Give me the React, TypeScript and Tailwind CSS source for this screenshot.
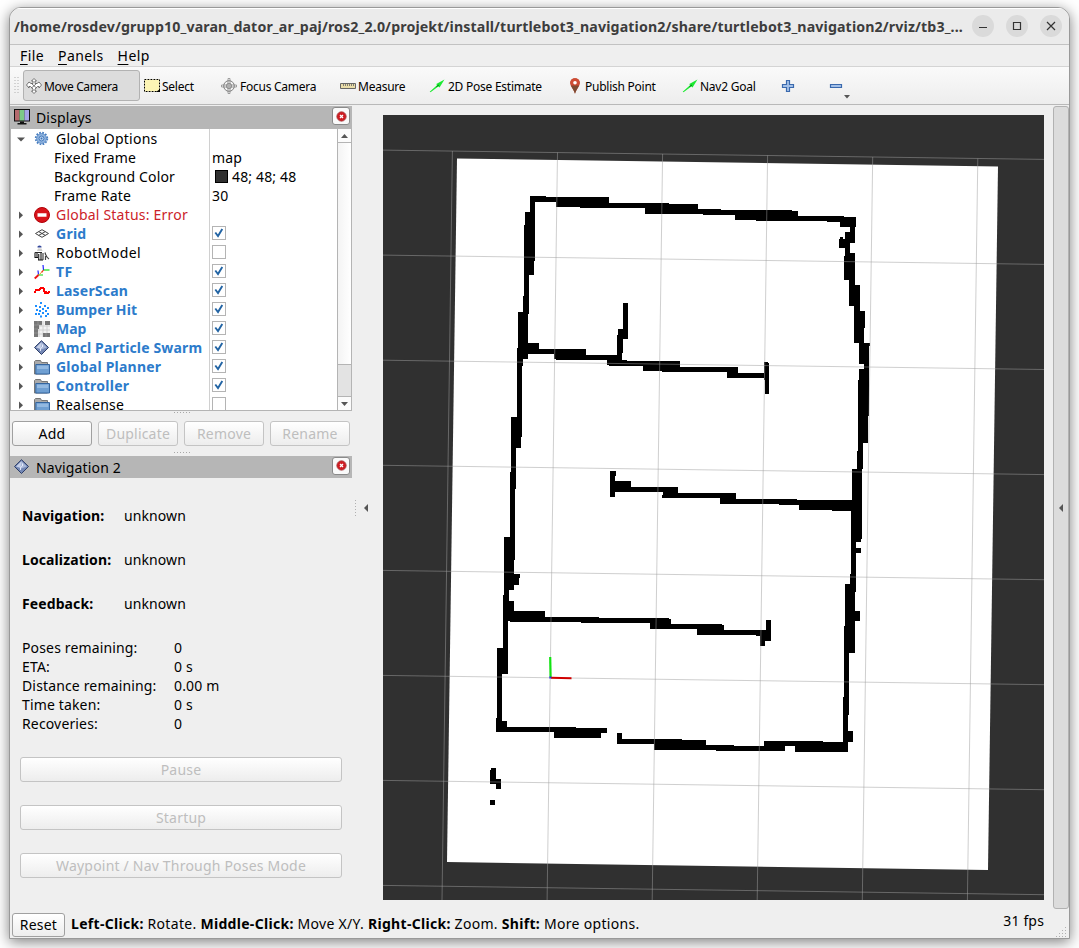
import React from "react";

type Rect = [number, number, number, number];

/* Occupied cells, as [left, top, right, bottom] in thirds of a pixel. */
const NORTH: Rect[] = [
  [90, 48, 138, 66], [90, 51, 327, 66], [168, 51, 327, 80], [240, 69, 507, 83], [435, 72, 507, 101], [438, 72, 594, 101],
  [594, 87, 663, 101], [610, 90, 705, 104], [705, 90, 876, 119], [705, 93, 894, 119], [768, 108, 1032, 122],
  [981, 111, 1068, 125], [1020, 111, 1068, 141], [1050, 125, 1065, 189], [1035, 156, 1065, 189],
  [1020, 171, 1029, 177], [1017, 177, 1050, 204], [1035, 189, 1050, 228], [1050, 219, 1065, 228], [1032, 228, 1065, 300],
  [1047, 300, 1065, 378], [1047, 315, 1080, 378], [1062, 378, 1080, 489], [1062, 393, 1095, 444], [1062, 444, 1092, 489],
  [1077, 489, 1110, 498], [1077, 489, 1107, 552], [1092, 552, 1107, 660], [1077, 567, 1107, 600], [1074, 600, 1107, 660],
  [90, 48, 105, 243], [75, 96, 105, 136], [72, 136, 105, 243], [72, 243, 102, 285], [72, 285, 87, 402], [69, 348, 87, 402],
  [54, 396, 84, 537], [51, 504, 69, 558], [51, 558, 66, 660], [54, 489, 117, 521], [84, 507, 168, 521],
  [162, 507, 258, 537], [168, 525, 366, 539], [321, 540, 381, 554], [327, 543, 540, 557], [429, 543, 540, 572],
  [486, 561, 714, 575], [681, 561, 714, 593], [681, 579, 800, 593], [793, 546, 804, 600], [795, 549, 807, 641],
  [369, 369, 384, 477], [354, 447, 384, 477], [351, 465, 369, 519], [351, 519, 366, 540],
];

const MIDDLE: Rect[] = [
  [111, 0, 126, 141], [93, 81, 126, 141], [93, 141, 123, 174], [93, 174, 108, 297], [90, 246, 108, 297], [90, 297, 105, 441],
  [72, 441, 105, 510], [72, 510, 102, 600], [72, 552, 120, 564], [72, 564, 117, 585], [72, 600, 87, 660],
  [69, 615, 87, 660], [69, 633, 102, 660], [1134, 0, 1167, 78], [1134, 78, 1164, 159], [1134, 159, 1149, 237],
  [1131, 183, 1149, 237], [1116, 237, 1146, 447], [1113, 363, 1143, 456], [1113, 456, 1128, 582], [1128, 474, 1143, 489],
  [1110, 552, 1128, 606], [1095, 582, 1128, 606], [1095, 582, 1125, 660], [390, 243, 408, 258], [390, 243, 405, 321],
  [390, 273, 453, 306], [405, 291, 594, 306], [549, 291, 594, 324], [546, 315, 594, 324], [549, 309, 768, 324],
  [720, 309, 768, 342], [720, 327, 951, 342], [897, 330, 1116, 345], [957, 330, 1116, 360], [1056, 330, 1116, 363],
];

const SOUTH: Rect[] = [
  [69, 45, 87, 93], [69, 62, 102, 123], [69, 93, 195, 123], [90, 111, 357, 126], [303, 114, 567, 129], [510, 114, 567, 147],
  [510, 117, 573, 147], [510, 132, 726, 147], [651, 132, 726, 165], [651, 135, 732, 165], [651, 150, 858, 165],
  [828, 150, 858, 168], [840, 168, 855, 198], [858, 120, 873, 183], [843, 150, 873, 183], [69, 123, 84, 282],
  [51, 204, 84, 282], [51, 282, 66, 423], [48, 414, 66, 456], [48, 423, 81, 456], [48, 441, 288, 456], [222, 444, 381, 459],
  [222, 444, 363, 474], [411, 459, 426, 492], [411, 477, 606, 492], [522, 480, 678, 510], [522, 495, 762, 510],
  [708, 498, 915, 513], [852, 483, 915, 513], [852, 483, 1029, 498], [945, 486, 1104, 516], [1095, 12, 1125, 219],
  [1125, 93, 1140, 123], [1092, 138, 1125, 219], [1092, 219, 1107, 405], [1089, 351, 1107, 405], [1089, 405, 1104, 516],
  [1089, 453, 1119, 486], [33, 564, 48, 612], [30, 570, 48, 612], [30, 597, 63, 612], [48, 597, 63, 627], [30, 660, 45, 675],
];

const GRID_ROWS = [150.1, 255.1, 360.2, 465.3, 570.4, 675.4, 780.4, 885.4];
const GRID_COLUMNS = [452.4, 557.5, 662.6, 767.6, 872.7, 977.8];

const toPath = (rects: Rect[]) => rects.map(([l, t, r, b]) => `M${l} ${t}H${r}V${b}H${l}Z`).join("");

function MapView() {
  return (
    <svg className="block h-[785px] w-[661px] bg-[#303030]" viewBox="383 115 661 785">
      <path d="M457 158.500L998 166.500L988 870L447 862Z" fill="#fff" />
      <g shapeRendering="crispEdges" fill="#000">
        <path transform="translate(500 180) scale(.33333)" d={toPath(NORTH)} />
        <path transform="translate(480 390) scale(.33333)" d={toPath(MIDDLE)} />
        <path transform="translate(480 580) scale(.33333)" d={toPath(SOUTH)} />
      </g>
      <g stroke="#a0a0a0" strokeOpacity=".5" strokeWidth="1">
        {GRID_ROWS.map((y) => <path key={y} d={`M383 ${y}L1044 ${y + 9.3}`} />)}
        {GRID_COLUMNS.map((x, i) => <path key={x} d={`M${x} ${151 + i * 1.5}L${x - 10.4} 900`} />)}
      </g>
      <path d="M551 677.800L571.500 678.200" stroke="#d00000" strokeWidth="2" />
      <path d="M550.600 677L550.200 657" stroke="#12e312" strokeWidth="2.200" />
      <path d="M549.300 676.500h2v2h-2z" fill="#3030e0" />
    </svg>
  );
}

const DiamondIcon = () => (
  <svg className="size-4" viewBox="0 0 16 16">
    <path d="M7.500 .7L14.500 7.500L7.500 14.500L.5 7.500Z" fill="#7488b5" stroke="#2c3d68" strokeWidth="1" />
    <path d="M7.500 2.200L12.800 7.500L7.500 9.500L2.200 7.500Z" fill="#a9b8d8" />
    <path d="M7.500 2.200L2.200 7.500L6.500 8.400Z" fill="#c7d1e8" />
    <path d="M6.500 11V8.500L8.500 7V4.500" fill="none" stroke="#eef2ff" strokeWidth=".9" />
  </svg>
);

const FolderIcon = () => (
  <svg className="size-4" viewBox="0 0 16 16">
    <path d="M.5 15V2.500L1.500 1.500H6.500L7.500 3.500H13.500V15Z" fill="#aaa" stroke="#777" />
    <path d="M1.800 5.500H15.500V15H1.800Z" fill="#6f9fd2" stroke="#34659f" />
    <path d="M3 6.700H14.300V10H3Z" fill="#93b9e1" />
  </svg>
);

const GearIcon = () => (
  <svg className="size-4" viewBox="0 0 16 16">
    <circle cx="7.500" cy="7.500" r="5.800" fill="none" stroke="#4a7fc0" strokeWidth="1.800" strokeDasharray="1.700 1.340" />
    <circle cx="7.500" cy="7.500" r="4.900" fill="#93b6e0" stroke="#4a7fc0" strokeWidth=".8" />
    <circle cx="7.500" cy="7.500" r="2.500" fill="#bcd3ee" stroke="#3b73b8" strokeWidth=".9" />
    <circle cx="7.500" cy="7.500" r="1" fill="#3b73b8" />
  </svg>
);

const ErrorIcon = () => (
  <svg className="size-4" viewBox="0 0 16 16">
    <circle cx="8" cy="8" r="7.500" fill="#d8131a" stroke="#b00008" />
    <path d="M3.500 6.200H12.500V9.800H3.500Z" fill="#fff" />
  </svg>
);

const GridIcon = () => (
  <svg className="size-4" viewBox="0 0 16 16" fill="none" stroke="#444" strokeWidth="1">
    <path d="M1.500 7.500L8 3.700L14.500 7.500L8 11.300ZM4.700 5.600L11.300 9.400M11.300 5.600L4.700 9.400" />
  </svg>
);

const RobotIcon = () => (
  <svg className="size-4" viewBox="0 0 16 16">
    <path d="M3.500 1.500Q5.500 -.4 7.500 1.500V2.500H3.500Z" fill="#33479a" />
    <path d="M4 3.500H7.500L8.500 6H3Z" fill="#ccc" />
    <path d="M1 7.500V13M3 7V12M4.700 9V15M7 7.500V15M1 7.500H8" stroke="#2a2a2a" strokeWidth="1.200" fill="none" />
    <path d="M9 8V15M11.500 11V15M11 7.500Q12 12 15 14" stroke="#444" strokeWidth="1.200" fill="none" />
    <path d="M4 15H9M1 12.500H4" stroke="#111" strokeWidth="1.200" />
  </svg>
);

const TfIcon = () => (
  <svg className="size-4" viewBox="0 0 16 16" fill="none" strokeWidth="1.200">
    <path d="M9 1L9.500 6" stroke="#22f" />
    <path d="M9.500 6H15.500" stroke="#1d1" />
    <path d="M9.500 6L7.500 8.500" stroke="#e11" />
    <path d="M4 6.500L4.500 11" stroke="#22f" />
    <path d="M4.500 11H9" stroke="#3d3" />
    <path d="M4.500 11L.7 14.500" stroke="#e11" strokeWidth="1.800" />
    <path d="M4.500 11L9 7" stroke="#e80" strokeDasharray="1 1" />
  </svg>
);

const LaserIcon = () => (
  <svg className="size-4" viewBox="0 0 16 16" fill="#f00" shapeRendering="crispEdges">
    <path d="M0 8H2V10H0ZM1 6H6V8H1ZM5 5H7V7H5ZM6 4H10V6H6ZM9 5H11V9H9ZM10 8H13V11H10ZM12 9H15V11H12ZM14 8H16V10H14Z" />
  </svg>
);

const BumperIcon = () => (
  <svg className="size-4" viewBox="0 0 16 16" fill="#1e8fff">
    <path d="M6 0h2v2H6zM1 3h2v2H1zM5 4h2v2H5zM10 3h2v2h-2zM8 6h2v2H8zM13 5h2v2h-2zM2 7h2v2H2zM5 8h2v2H5zM1 11h2v2H1zM4 11h2v2H4zM8 10h2v2H8zM11 8h2v2h-2zM13 11h2v2h-2zM6 13.500h2v2H6zM11 13h2v2h-2z" />
  </svg>
);

const MapIcon = () => (
  <svg className="size-4" viewBox="0 0 16 16">
    <path d="M0 0H16V16H0Z" fill="#f4f4f4" />
    <path d="M5 0V16M9 0V16M13 0V16M0 5H16M0 9H16M0 13H16" stroke="#ccc" strokeWidth=".8" />
    <path d="M0 0H8V4H5V8H4V16H0ZM11 0H16V4H11ZM9 12H16V16H9Z" fill="#777" />
    <path d="M4 0V4M0 4H8M0 8H4M0 12H4M12 12V16" stroke="#aaa" strokeWidth=".5" />
  </svg>
);

const CloseBox = () => (
  <span className="flex size-[18px] items-center justify-center rounded-[3px] border border-[#8a8a8a] bg-[#fafafa]">
    <svg className="size-[11px]" viewBox="0 0 11 11">
      <circle cx="5.500" cy="5.500" r="4.700" fill="#cf1c22" stroke="#a3474a" strokeWidth=".8" />
      <path d="M4 4L7 7M7 4L4 7" stroke="#fff" strokeWidth="1.300" />
    </svg>
  </span>
);

const MoveIcon = () => (
  <svg className="size-4" viewBox="0 0 16 16" fill="#fff" stroke="#555" strokeWidth=".8">
    <path d="M8 .5L10.500 3H9V5.500H11L13 4L15.500 7L13 10V8.500H11.500L9 11V13H10.500L8 15.500L5.500 13H7V11L4.500 8.500H3V10L.5 7L3 4L5 5.500H7V3H5.500Z" />
    <path d="M5.500 5.500L10.500 10M10.500 5.500L5.500 10" />
  </svg>
);

const SelectIcon = () => (
  <svg className="size-4" viewBox="0 0 16 16">
    <path d="M.5 1.500H15.500V13.500H.5Z" fill="#fdf5b5" stroke="#000" strokeDasharray="1.800 1.200" />
    <path d="M16 11V14H12Z" fill="#000" />
  </svg>
);

const FocusIcon = () => (
  <svg className="size-4" viewBox="0 0 16 16" fill="none" stroke="#808080">
    <circle cx="8" cy="8" r="5.300" strokeWidth="1" />
    <circle cx="8" cy="8" r="2.700" strokeWidth=".8" />
    <path d="M7 .5V15.500M9 .5V15.500M.5 7H15.500M.5 9H15.500" strokeWidth=".7" />
    <path d="M7 .5H9M7 15.500H9M.5 7V9M15.500 7V9" strokeWidth=".7" />
  </svg>
);

const MeasureIcon = () => (
  <svg className="size-4" viewBox="0 0 16 16">
    <path d="M.5 5.500H15.500V10.500H.5Z" fill="#e9dda9" stroke="#666" />
    <path d="M3.500 6V8M5.500 6V8M7.500 6V8M9.500 6V8M11.500 6V8M13.500 6V8" stroke="#666" strokeWidth=".8" />
  </svg>
);

const GoalIcon = () => (
  <svg className="size-4" viewBox="0 0 16 16">
    <path d="M.7 13.700L8 7.300L7.300 6L15.500 1.500L10.500 9.500L9.300 8.500L1.500 14.200Z" fill="#1bea30" />
    <path d="M7.500 8.500L10 7" stroke="#0a7a18" />
  </svg>
);

const PinIcon = () => (
  <svg className="size-4" viewBox="0 0 16 16">
    <path d="M8 15.800C7.200 12 3.200 8.600 3.200 5A4.800 4.800 0 0 1 12.800 5C12.800 8.600 8.800 12 8 15.800Z" fill="#b8472f" />
    <path d="M8 15.800C7.200 12.500 5 10 4.200 7.800H11.800C11 10 8.800 12.500 8 15.800Z" fill="#7b4a32" />
    <path d="M3.200 5A4.800 4.800 0 0 1 12.800 5L11.800 7H4.200Z" fill="#cf4c34" />
    <circle cx="8" cy="4.800" r="1.800" fill="#fff" />
  </svg>
);

const PlusIcon = () => (
  <svg className="size-4" viewBox="0 0 16 16">
    <path d="M6.500 2.500H9.500V6.500H13.500V9.500H9.500V13.500H6.500V9.500H2.500V6.500H6.500Z" fill="#a3c0e8" stroke="#3a69ad" strokeWidth="1.200" />
  </svg>
);

const MinusIcon = () => (
  <svg className="size-4" viewBox="0 0 16 16">
    <path d="M2.500 6.500H13.500V9.500H2.500Z" fill="#a3c0e8" stroke="#3a69ad" strokeWidth="1.200" />
  </svg>
);

const MonitorIcon = () => (
  <svg className="mb-px size-4" viewBox="0 0 16 16">
    <path d="M0 0H16V12.500H0Z" fill="#111" />
    <path d="M1 1H5.500V11.500H1Z" fill="#b56a6e" />
    <path d="M5.500 1H10.500V11.500H5.500Z" fill="#7cc987" />
    <path d="M10.500 1H15V11.500H10.500Z" fill="#a5a3e6" />
    <path d="M6 12.500H10V14H12.500V15.500H3.500V14H6Z" fill="#111" />
  </svg>
);

type Display = {
  label: string;
  icon?: () => React.ReactElement;
  tone?: "on" | "error";
  open?: boolean;
  checked?: boolean;
  value?: string;
  swatch?: boolean;
  tracking?: string;
};

const DISPLAYS: Display[] = [
  { label: "Global Options", icon: GearIcon, open: true, tracking: "tracking-[0.25px]" },
  { label: "Fixed Frame", value: "map", tracking: "tracking-[0.22px]" },
  { label: "Background Color", value: "48; 48; 48", swatch: true, tracking: "tracking-[0.16px]" },
  { label: "Frame Rate", value: "30", tracking: "tracking-[0.25px]" },
  { label: "Global Status: Error", icon: ErrorIcon, tone: "error", tracking: "tracking-[0.21px]" },
  { label: "Grid", icon: GridIcon, tone: "on", checked: true, tracking: "tracking-[0.25px]" },
  { label: "RobotModel", icon: RobotIcon, checked: false, tracking: "tracking-[0.45px]" },
  { label: "TF", icon: TfIcon, tone: "on", checked: true, tracking: "tracking-[0.5px]" },
  { label: "LaserScan", icon: LaserIcon, tone: "on", checked: true, tracking: "tracking-[0.2px]" },
  { label: "Bumper Hit", icon: BumperIcon, tone: "on", checked: true, tracking: "tracking-[0.1px]" },
  { label: "Map", icon: MapIcon, tone: "on", checked: true },
  { label: "Amcl Particle Swarm", icon: DiamondIcon, tone: "on", checked: true, tracking: "tracking-[0.15px]" },
  { label: "Global Planner", icon: FolderIcon, tone: "on", checked: true, tracking: "tracking-[0.22px]" },
  { label: "Controller", icon: FolderIcon, tone: "on", checked: true, tracking: "tracking-[0.28px]" },
  { label: "Realsense", icon: FolderIcon, checked: false, tracking: "tracking-[0.25px]" },
];

const TONES = { on: "font-bold text-[#2c7bcb]", error: "text-[#cc2229]", plain: "text-black" };

function DisplayRow({ item }: { item: Display }) {
  const Icon = item.icon;
  return (
    <div className="flex h-[19px] shrink-0">
      <div className="flex w-[198px] shrink-0 items-center overflow-hidden whitespace-nowrap">
        {Icon ? (
          <>
            <svg className="ml-[6px] mr-[9px] size-2 shrink-0" viewBox="0 0 8 8" fill="#555">
              {item.open ? <path d="M0 2.500H8L4 6.500Z" /> : <path d="M2 .5V8L6 4.200Z" />}
            </svg>
            <span className="mr-[6px] shrink-0"><Icon /></span>
          </>
        ) : (
          <span className="w-[43px] shrink-0" />
        )}
        <span className={TONES[item.tone ?? "plain"] + " " + (item.tracking ?? "")}>{item.label}</span>
      </div>
      <div className="flex flex-1 items-center border-l border-[#d0d0d0] pl-[2px] tracking-[0.15px]">
        {item.checked !== undefined && (
          <span className="mb-px flex size-[14px] items-center justify-center border border-[#b4b4b4] bg-white">
            {item.checked && (
              <svg className="size-[10px]" viewBox="0 0 10 10">
                <path d="M1.300 4.500L4 8L8.300 1" fill="none" stroke="#2264a4" strokeWidth="1.900" />
              </svg>
            )}
          </span>
        )}
        {item.swatch && <span className="ml-[3px] mr-[4px] size-[13px] border border-black bg-[#303030]" />}
        {item.value}
      </div>
    </div>
  );
}

const DotsH = () => (
  <svg className="ml-[2px] h-[2px] w-[17px]" viewBox="0 0 17 2" fill="#a8a8a8">
    <path d="M0 0h1v1H0zM3 0h1v1H3zM6 0h1v1H6zM9 0h1v1H9zM12 0h1v1h-1zM15 0h1v1h-1z" />
  </svg>
);

const BUTTON = "flex items-center justify-center rounded-[3px] border bg-linear-to-b from-white to-[#ededed] whitespace-nowrap tracking-[0.2px]";
const ENABLED = "border-[#a0a0a0] text-black";
const DISABLED = "border-[#c4c4c4] text-[#bebebe]";

const TOOLS = [
  { label: "Select", Icon: SelectIcon, box: "w-[77px]", gap: "ml-[2px]" },
  { label: "Focus Camera", Icon: FocusIcon, box: "w-[119px]", gap: "ml-[3px]" },
  { label: "Measure", Icon: MeasureIcon, box: "w-[89px]", gap: "ml-[2px]" },
  { label: "2D Pose Estimate", Icon: GoalIcon, box: "w-[138px]", gap: "ml-[3px]" },
  { label: "Publish Point", Icon: PinIcon, box: "w-[115px]", gap: "ml-[2px]" },
  { label: "Nav2 Goal", Icon: GoalIcon, box: "w-[98px]", gap: "ml-[2px]" },
];

const STATUS = [["Navigation:", "unknown"], ["Localization:", "unknown"], ["Feedback:", "unknown"]];
const METRICS = [["Poses remaining:", "0"], ["ETA:", "0 s"], ["Distance remaining:", "0.00 m"], ["Time taken:", "0 s"], ["Recoveries:", "0"]];

function TitleBar() {
  return (
    <header className="flex h-[37px] shrink-0 items-center border-b border-[#c2c2c2] bg-[#ebebeb] pl-1 shadow-[inset_0_1px_0_#fff]">
      <h1 className="w-[958px] whitespace-nowrap text-[14.200px] font-bold tracking-[0.123px] text-[#3d3d3d]">
        /home/rosdev/grupp10_varan_dator_ar_paj/ros2_2.0/projekt/install/turtlebot3_navigation2/share/turtlebot3_navigation2/rviz/tb3_...
      </h1>
      <div className="flex gap-3">
        {["M7 12.500H15", "M7.500 7.500H14.500V14.500H7.500Z", "M7 7L15 15M15 7L7 15"].map((d) => (
          <svg key={d} className="size-[22px] rounded-full bg-[#dadada]" viewBox="0 0 22 22">
            <path d={d} fill="none" stroke="#333" strokeWidth="1.200" />
          </svg>
        ))}
      </div>
    </header>
  );
}

function DockHeader({ title, children }: { title: string; children: React.ReactNode }) {
  return (
    <div className="flex h-full items-center bg-[#b6b6b6] pl-1 pr-[2px]">
      {children}
      <span className="ml-[6px] flex-1 tracking-[0.15px]">{title}</span>
      <span className="mb-[3px]"><CloseBox /></span>
    </div>
  );
}

export default function App() {
  return (
    <div className="flex h-[948px] w-[1079px] overflow-hidden bg-white pl-[9px] pt-[7px] font-['Noto_Sans',sans-serif] text-[14px] leading-[19px] text-black">
      <div className="flex h-[932px] w-[1061px] shrink-0 flex-col overflow-hidden rounded-t-[12px] border border-[#999] bg-[#efefef] shadow-[0_3px_14px_rgba(0,0,0,0.5)]">
        <TitleBar />
        <nav className="flex h-[22px] shrink-0 items-center gap-[14px] border-b border-[#d4d4d4] pl-[10px]">
          {["File", "Panels", "Help"].map((m) => (
            <span key={m} className="tracking-[0.4px]"><u className="underline-offset-[3px]">{m[0]}</u>{m.slice(1)}</span>
          ))}
        </nav>
        <div className="flex h-[38px] shrink-0 items-center border-b border-[#b8b8b8] bg-linear-to-b from-[#fafafa] to-[#ededed] pl-1 text-[12px] tracking-[-0.25px]">
          <svg className="mr-1 h-[17px] w-[5px]" viewBox="0 0 5 17">
            <path d="M1 0V17M4 0V17" stroke="#b0b0b0" strokeDasharray="1 2" />
          </svg>
          <div className="mr-[4px] flex h-[31px] w-[117px] items-center rounded-[3px] border border-[#b2b2b2] bg-[#dcdcdc] pl-[2px]">
            <MoveIcon /><span className="ml-[2px] pt-[2px] tracking-[-0.35px]">Move Camera</span>
          </div>
          {TOOLS.map(({ label, Icon, box, gap }) => (
            <div key={label} className={"flex shrink-0 items-center whitespace-nowrap " + box}>
              <Icon /><span className={"pt-[2px] " + gap}>{label}</span>
            </div>
          ))}
          <div className="w-[48px]"><PlusIcon /></div>
          <MinusIcon />
          <svg className="mt-[22px] h-1 w-[6px]" viewBox="0 0 6 4"><path d="M0 0H6L3 3.500Z" fill="#555" /></svg>
        </div>

        <div className="flex h-[804px] shrink-0">
          <aside className="flex w-[342px] shrink-0 flex-col pt-[1px]">
            <div className="h-[23px] shrink-0"><DockHeader title="Displays"><MonitorIcon /></DockHeader></div>
            <div className="flex h-[282px] shrink-0 border border-t-0 border-[#b4b4b4] bg-white">
              <div className="flex h-[281px] flex-1 flex-col overflow-hidden">
                {DISPLAYS.map((item) => <DisplayRow key={item.label} item={item} />)}
              </div>
              <div className="flex w-[14px] flex-col border-l border-[#b4b4b4] bg-[#e3e3e3]">
                <div className="flex h-[14px] items-center justify-center border-b border-[#b4b4b4] bg-[#fbfbfb]">
                  <svg className="h-1 w-[7px]" viewBox="0 0 7 4"><path d="M0 4H7L3.500 0Z" fill="#555" /></svg>
                </div>
                <div className="h-[222px] border-b border-[#b4b4b4] bg-linear-to-r from-[#f4f4f4] to-white" />
                <div className="flex-1" />
                <div className="flex h-[14px] items-center justify-center border-t border-[#b4b4b4] bg-[#fbfbfb]">
                  <svg className="h-1 w-[7px]" viewBox="0 0 7 4"><path d="M0 0H7L3.500 4Z" fill="#555" /></svg>
                </div>
              </div>
            </div>
            <div className="flex h-[10px] items-start justify-center pt-[1px]"><DotsH /></div>
            <div className="flex gap-[6px] pl-[2px]">
              <button className={`${BUTTON} ${ENABLED} h-[25px] w-[80px]`}>Add</button>
              <button className={`${BUTTON} ${DISABLED} h-[25px] w-[80px]`}>Duplicate</button>
              <button className={`${BUTTON} ${DISABLED} h-[25px] w-[80px]`}>Remove</button>
              <button className={`${BUTTON} ${DISABLED} h-[25px] w-[80px]`}>Rename</button>
            </div>
            <div className="flex h-[10px] items-center justify-center pt-[3px]"><DotsH /></div>
            <div className="h-[22px] shrink-0"><DockHeader title="Navigation 2"><DiamondIcon /></DockHeader></div>
            <dl className="mt-[16px] px-3 leading-[44px] tracking-[0.1px]">
              {STATUS.map(([k, v]) => (
                <div key={k} className="flex h-[44px]"><dt className="w-[102px] font-bold">{k}</dt><dd>{v}</dd></div>
              ))}
            </dl>
            <dl className="mt-[12px] px-3 tracking-[0.15px]">
              {METRICS.map(([k, v]) => (
                <div key={k} className="flex"><dt className="w-[152px]">{k}</dt><dd>{v}</dd></div>
              ))}
            </dl>
            <div className="mt-[24px] flex flex-col gap-[23px] px-[10px]">
              <button className={`${BUTTON} ${DISABLED} h-[25px]`}>Pause</button>
              <button className={`${BUTTON} ${DISABLED} h-[25px]`}>Startup</button>
              <button className={`${BUTTON} ${DISABLED} h-[25px]`}>Waypoint / Nav Through Poses Mode</button>
            </div>
          </aside>
          <div className="flex w-[31px] shrink-0 items-center pl-[3px] pt-[2px]">
            <svg className="h-[17px] w-1" viewBox="0 0 4 17"><path d="M.5 0V17" stroke="#b0b0b0" strokeDasharray="1 2" /></svg>
            <svg className="ml-[5px] h-2 w-1" viewBox="0 0 4 8"><path d="M4 0V8L0 4Z" fill="#555" /></svg>
          </div>
          <main className="shrink-0 pt-[10px]"><MapView /></main>
          <div className="ml-[9px] mt-[1px] flex h-[803px] w-4 items-center justify-center rounded-[3px] border border-[#b2b2b2] bg-[#dcdcdc]">
            <svg className="h-2 w-1" viewBox="0 0 4 8"><path d="M4 0V8L0 4Z" fill="#555" /></svg>
          </div>
        </div>

        <footer className="flex flex-1 items-center pl-[2px]">
          <button className={`${BUTTON} ${ENABLED} mt-[2px] h-[24px] w-[53px]`}>Reset</button>
          <p className="ml-[6px] flex-1 whitespace-nowrap tracking-[0.3px]">
            <b>Left-Click:</b> Rotate. <b>Middle-Click:</b> Move X/Y. <b>Right-Click:</b> Zoom. <b>Shift:</b> More options.
          </p>
          <span className="mb-[6px] tracking-[0.15px]">31 fps</span>
          <svg className="ml-[12px] mr-[2px] size-[11px] self-end" viewBox="0 0 11 11" fill="#b0b0b0">
            <path d="M9 0h1v1H9zM9 3h1v1H9zM6 3h1v1H6zM9 6h1v1H9zM6 6h1v1H6zM3 6h1v1H3zM9 9h1v1H9zM6 9h1v1H6zM3 9h1v1H3zM0 9h1v1H0z" />
          </svg>
        </footer>
      </div>
    </div>
  );
}
